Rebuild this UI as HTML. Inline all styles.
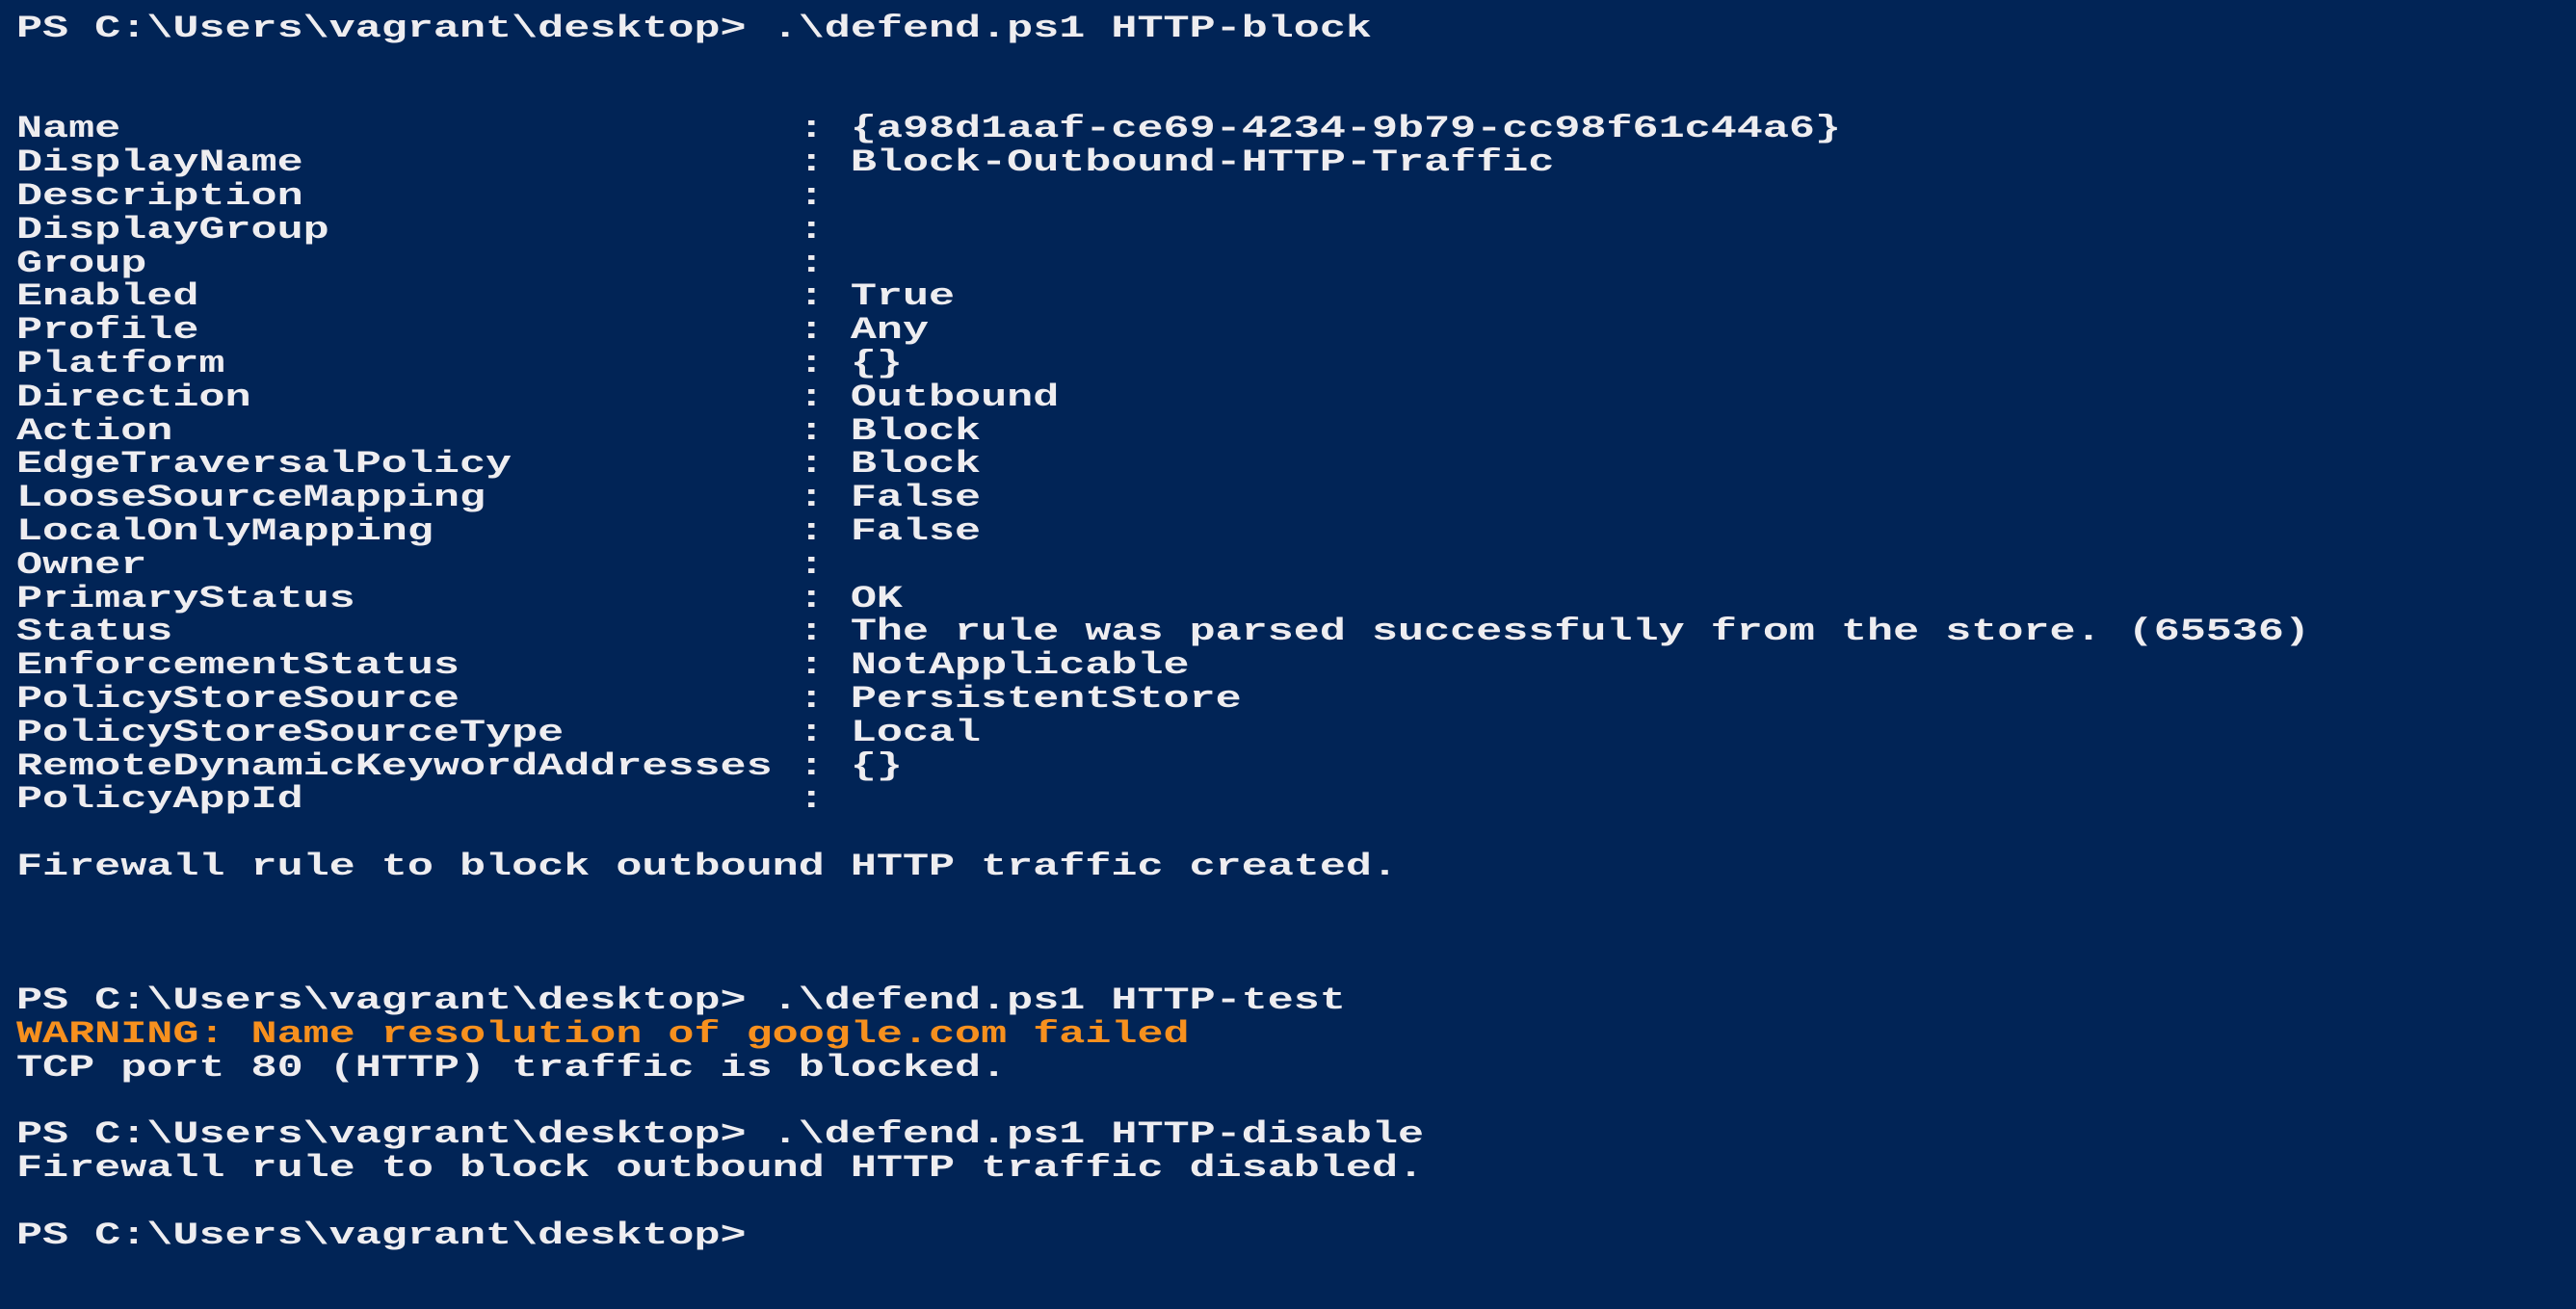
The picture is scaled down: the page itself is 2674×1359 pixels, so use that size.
<!DOCTYPE html>
<html><head><meta charset="utf-8"><style>
html,body{margin:0;padding:0;background:#012456;width:2674px;height:1359px;overflow:hidden}
pre{margin:0;position:absolute;left:17px;top:13px;font-family:"Liberation Mono","DejaVu Sans Mono",monospace;font-weight:bold;font-size:32px;line-height:34.8px;color:#eeedf0;transform:scaleX(1.409);transform-origin:0 0;white-space:pre}
.w{color:#f7901e}
</style></head><body><pre>PS C:\Users\vagrant\desktop> .\defend.ps1 HTTP-block


Name                          : {a98d1aaf-ce69-4234-9b79-cc98f61c44a6}
DisplayName                   : Block-Outbound-HTTP-Traffic
Description                   :
DisplayGroup                  :
Group                         :
Enabled                       : True
Profile                       : Any
Platform                      : {}
Direction                     : Outbound
Action                        : Block
EdgeTraversalPolicy           : Block
LooseSourceMapping            : False
LocalOnlyMapping              : False
Owner                         :
PrimaryStatus                 : OK
Status                        : The rule was parsed successfully from the store. (65536)
EnforcementStatus             : NotApplicable
PolicyStoreSource             : PersistentStore
PolicyStoreSourceType         : Local
RemoteDynamicKeywordAddresses : {}
PolicyAppId                   :

Firewall rule to block outbound HTTP traffic created.



PS C:\Users\vagrant\desktop> .\defend.ps1 HTTP-test
<span class="w">WARNING: Name resolution of google.com failed</span>
TCP port 80 (HTTP) traffic is blocked.

PS C:\Users\vagrant\desktop> .\defend.ps1 HTTP-disable
Firewall rule to block outbound HTTP traffic disabled.

PS C:\Users\vagrant\desktop>
</pre></body></html>
